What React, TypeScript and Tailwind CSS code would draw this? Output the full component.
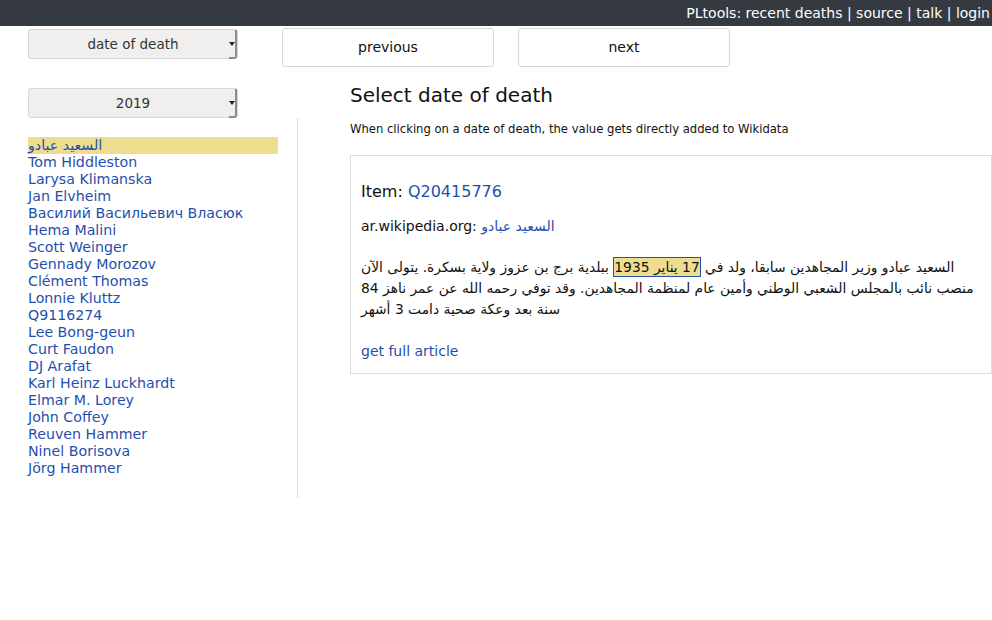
const names = [
  "السعيد عبادو",
  "Tom Hiddleston",
  "Larysa Klimanska",
  "Jan Elvheim",
  "Василий Васильевич Власюк",
  "Hema Malini",
  "Scott Weinger",
  "Gennady Morozov",
  "Clément Thomas",
  "Lonnie Kluttz",
  "Q9116274",
  "Lee Bong-geun",
  "Curt Faudon",
  "DJ Arafat",
  "Karl Heinz Luckhardt",
  "Elmar M. Lorey",
  "John Coffey",
  "Reuven Hammer",
  "Ninel Borisova",
  "Jörg Hammer",
];

function FakeSelect({ label }: { label: string }) {
  return (
    <div className="relative flex h-[30px] w-[210px] items-center justify-center rounded-[3px] border border-[#d6d6d6] bg-[#f0efee] text-[13.5px] text-[#333]">
      {label}
      <span className="absolute right-0 top-0 flex h-[29px] w-[8px] items-center justify-center border-r-2 border-b-2 border-[#8c8c8c] rounded-br-[3px]">
        <span className="h-0 w-0 border-x-[3px] border-t-[4px] border-x-transparent border-t-[#222]" />
      </span>
    </div>
  );
}

export default function App() {
  return (
    <div className="min-h-[620px] bg-white text-[#111] font-['DejaVu_Sans',sans-serif]">
      <div className="flex h-[26px] items-center justify-end bg-[#343a40] pr-[2px] text-[14px] text-white">
        PLtools: recent deaths | source | talk | login
      </div>

      {/* top row: field select + paging */}
      <div className="flex">
        <div className="w-[282px] shrink-0 pl-[28px] pt-[3px]">
          <FakeSelect label="date of death" />
        </div>
        <div className="flex gap-[24px] pt-[2px]">
          <button className="h-[39px] w-[212px] rounded-[3px] border border-[#d6d6d6] bg-white text-[14px] text-[#111]">
            previous
          </button>
          <button className="h-[39px] w-[212px] rounded-[3px] border border-[#d6d6d6] bg-white text-[14px] text-[#111]">
            next
          </button>
        </div>
      </div>

      <div className="flex">
        <div className="w-[298px] shrink-0">
          <div className="pl-[28px] pt-[21px]">
            <FakeSelect label="2019" />
          </div>
          <div className="h-[380px] border-r border-[#dcdcdc] pl-[28px] pt-[19px]">
            <div className="w-[250px]">
              {names.map((n, i) => (
                <div
                  key={n}
                  className={
                    i === 0
                      ? "h-[17px] bg-[#eedd8f] text-[14.2px] leading-[17px] text-[#1f4fae]"
                      : "h-[17px] text-[14.2px] leading-[17px] text-[#1f4fae]"
                  }
                >
                  {n}
                </div>
              ))}
            </div>
          </div>
        </div>

        <div className="flex-1 pl-[52px]">
          <h1 className="mt-[14px] text-[20px] leading-[28px] text-[#111]">Select date of death</h1>
          <p className="mt-[12px] text-[11.6px] leading-[16px]">
            When clicking on a date of death, the value gets directly added to Wikidata
          </p>
          <div className="mt-[18px] border border-[#dcdcdc] px-[10px] pt-[25px] pb-[12px]">
            <div className="text-[16px] leading-[22px]">
              Item: <span className="text-[#1f4fae]">Q20415776</span>
            </div>
            <div className="mt-[13px] text-[14px] leading-[20px]">
              ar.wikipedia.org: <span className="text-[#1f4fae]">السعيد عبادو</span>
            </div>
            <p dir="ltr" className="mt-[21px] text-[13.85px] leading-[21px]">
              السعيد عبادو وزير المجاهدين سابقا، ولد في{" "}
              <span className="border border-[#2a4fa8] bg-[#eedd8f] py-[1px]">17 يناير 1935</span>{" "}
              ببلدية برج بن عزوز ولاية بسكرة. يتولى الآن منصب نائب بالمجلس الشعبي الوطني وأمين عام لمنظمة المجاهدين. وقد توفي رحمه الله عن عمر ناهز 84 سنة بعد وعكة صحية دامت 3 أشهر
            </p>
            <div className="mt-[21px] text-[14px] leading-[20px] text-[#1f4fae]">get full article</div>
          </div>
        </div>
      </div>
    </div>
  );
}
